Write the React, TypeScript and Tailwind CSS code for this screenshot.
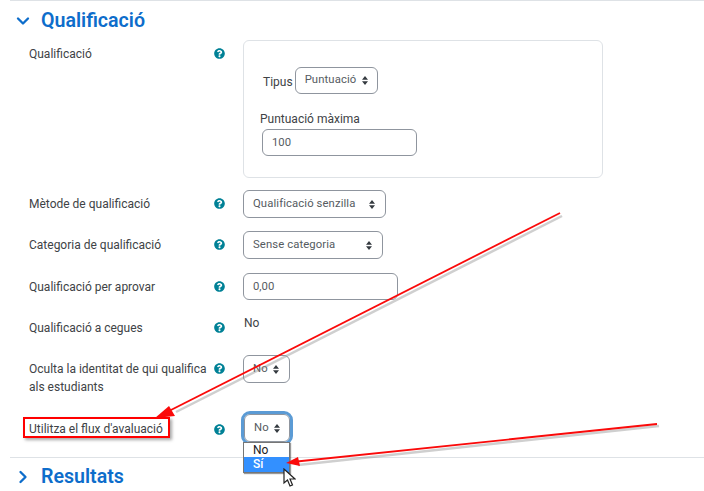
import { ChevronDown, ChevronRight } from "lucide-react";

const HelpIcon = () => (
  <svg viewBox="0 0 512 512" className="size-[11px] fill-[#008196]">
    <path d="M504 256c0 137-111 248-248 248S8 393 8 256 119 8 256 8s248 111 248 248zM263 90c-54 0-89 23-116 64-4 5-3 12 3 16l35 26c5 4 13 3 17-2 18-23 30-36 57-36 20 0 45 13 45 33 0 15-12 22-33 34-23 14-55 31-55 73v8c0 7 5 12 12 12h56c7 0 12-5 12-12v-3c0-29 86-31 86-109 0-60-62-104-119-104zm-7 252c-26 0-47 21-47 47s21 47 47 47 47-21 47-47-21-47-47-47z" />
  </svg>
);

const SortCaret = () => (
  <svg viewBox="0 0 8 12" className="h-[9px] w-[6px] shrink-0 fill-[#343a40]">
    <path d="M4 0 8 5H0zM4 12 0 7h8z" />
  </svg>
);

const Select = ({ text, className }: { text: string; className: string }) => (
  <div
    className={`flex items-center justify-between rounded-md border border-[#8f959e] bg-white pl-[9px] text-[11.3px] tracking-[0.1px] text-[#555b61] ${className}`}
  >
    <span>{text}</span>
    <SortCaret />
  </div>
);

const Row = ({
  label,
  top,
  labelPad = "pt-[5px]",
  iconPad = "pt-[8px]",
  children,
}: {
  label: React.ReactNode;
  top: string;
  labelPad?: string;
  iconPad?: string;
  children: React.ReactNode;
}) => (
  <div className={`flex ${top}`}>
    <div className={`w-[185px] shrink-0 box-content pl-[29px] text-[12px] leading-[18px] text-[#404346] ${labelPad}`}>
      {label}
    </div>
    <div className={`flex w-[29px] shrink-0 items-start ${iconPad}`}>
      <HelpIcon />
    </div>
    {children}
  </div>
);

const Arrows = () => (
  <svg
    className="pointer-events-none absolute left-0 top-0"
    width="704"
    height="491"
    viewBox="0 0 704 491"
  >
    <path d="M562 216 176 412" stroke="#888" strokeOpacity="0.4" strokeWidth="2.5" fill="none" />
    <path d="M560 213 165 413" stroke="#fa0a0a" strokeWidth="1.8" fill="none" />
    <path d="M155 418 169 406 175 416z" fill="#fa0a0a" />
  </svg>
);

const Arrow2 = () => (
  <svg
    className="pointer-events-none absolute left-0 top-0"
    width="704"
    height="491"
    viewBox="0 0 704 491"
  >
    <path d="M659 426 298 465" stroke="#888" strokeOpacity="0.4" strokeWidth="2.5" fill="none" />
    <path d="M657 424 292 462" stroke="#fa0a0a" strokeWidth="1.8" fill="none" />
    <path d="M286 463 298 457 300 466z" fill="#fa0a0a" />
  </svg>
);

const Cursor = () => (
  <svg
    className="absolute left-[283px] top-[468px]"
    width="13"
    height="19"
    viewBox="0 0 13 19"
  >
    <path
      d="M1 1v14l3.5-3 2.5 6 2.5-1-2.5-6H12z"
      fill="#fff"
      stroke="#222"
      strokeWidth="1.2"
    />
  </svg>
);

export default function App() {
  return (
    <div className="relative h-[491px] w-[704px] overflow-hidden bg-white font-['Roboto',sans-serif]">
      <div className="ml-[10px] h-px bg-[#dee2e6]" />
      <div className="flex h-[39px] items-center text-[#0d6dcb]">
        <ChevronDown className="ml-[13px] size-[20px]" strokeWidth={2.8} />
        <h3 className="ml-[8px] text-[19.6px] font-semibold">Qualificació</h3>
      </div>

      <Row label="Qualificació" top="mt-0">
        <div className="h-[138px] w-[360px] rounded-md border border-[#dee2e6]">
          <div className="mt-[26px] flex items-center">
            <span className="ml-[19px] mr-[2px] mt-[3px] text-[12px] text-[#404346]">Tipus</span>
            <Select text="Puntuació" className="h-[27px] w-[83px] pr-[9px]" />
          </div>
          <div className="ml-[16px] mt-[16px] text-[12px] leading-[18px] text-[#404346]">
            Puntuació màxima
          </div>
          <div className="ml-[18px] mt-[1px] flex h-[27px] w-[155px] items-center rounded-md border border-[#8f959e] pl-[9px] pt-px text-[11.3px] text-[#555b61]">
            100
          </div>
        </div>
      </Row>

      <Row label="Mètode de qualificació" top="mt-[12px]">
        <Select text="Qualificació senzilla" className="h-[28px] w-[143px] pr-[10px]" />
      </Row>
      <Row label="Categoria de qualificació" top="mt-[13px]">
        <Select text="Sense categoria" className="h-[28px] w-[140px] pr-[10px]" />
      </Row>
      <Row label="Qualificació per aprovar" top="mt-[14px]">
        <div className="flex h-[27px] w-[155px] items-center rounded-md border border-[#8f959e] pl-[9px] pt-px text-[11.3px] text-[#555b61]">
          0,00
        </div>
      </Row>
      <Row label="Qualificació a cegues" top="mt-[14px]">
        <span className="ml-px mt-px text-[12px] leading-[16px] text-[#404346]">No</span>
      </Row>
      <Row
        label={
          <>
            Oculta la identitat de qui qualifica
            <br />
            als estudiants
          </>
        }
        top="mt-[18px]"
      >
        <Select text="No" className="h-[28px] w-[47px] pr-[10px]" />
      </Row>
      <Row
        label={
          <span className="relative block">
            Utilitza el flux d'avaluació
            <span className="absolute -left-[6px] -top-[3px] h-[21px] w-[147px] border-2 border-[#ff0000] shadow-[2px_2px_3px_rgba(0,0,0,0.35)]" />
          </span>
        }
        top="mt-[18px]"
        labelPad="pt-[6px]"
        iconPad="pt-[10px]"
      >
        <Select
          text="No"
          className="ml-px h-[28px] w-[46px] rounded-lg border-[#8ab4dc] pr-[9px] outline-[3px] outline-[#5b9bd5]"
        />
      </Row>

      <div className="ml-[10px] mt-[15px] h-px bg-[#dee2e6]" />
      <div className="flex h-[37px] items-center text-[#0d6dcb]">
        <ChevronRight className="ml-[13px] size-[20px]" strokeWidth={2.8} />
        <h3 className="ml-[8px] text-[19.6px] font-semibold">Resultats</h3>
      </div>

      <Arrows />
      <div className="absolute left-[243px] top-[442px] w-[47px] border border-[#767676] bg-white text-[12px] leading-[14px] text-[#222] shadow-[1px_1px_1px_rgba(0,0,0,0.4)]">
        <div className="h-[14px] pl-[9px]">No</div>
        <div className="h-[15px] bg-[#3390ff] pl-[9px] font-medium text-white">Sí</div>
      </div>
      <Arrow2 />
      <Cursor />
    </div>
  );
}
